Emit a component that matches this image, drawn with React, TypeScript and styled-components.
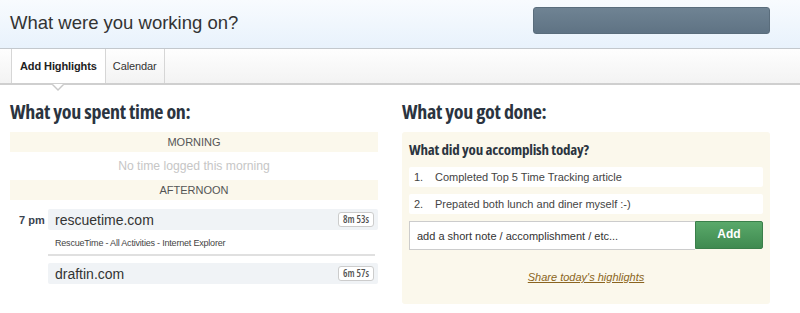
import styled, { createGlobalStyle } from "styled-components";

const GlobalStyle = createGlobalStyle`
  html, body {
    margin: 0;
    padding: 0;
    background: #fff;
    font-family: "Liberation Sans", Arial, sans-serif;
  }
  * { box-sizing: border-box; }
`;

// --- Header ---
const Header = styled.header`
  height: 49px;
  display: flex;
  align-items: center;
  justify-content: space-between;
  padding: 0 30px 0 10px;
  background: linear-gradient(#f8fbfe, #e8f2fc);
  border-bottom: 1px solid #c3c8cd;
`;
const Title = styled.h1`
  margin: 0 0 3px;
  font-size: 18.5px;
  font-weight: normal;
  color: #333;
`;
const DarkButton = styled.div`
  width: 237px;
  height: 27px;
  margin-top: -7px;
  border-radius: 3px;
  border: 1px solid #5a6d7c;
  background: linear-gradient(#6f8393, #5f7384);
`;

// --- Tabs ---
const TabBar = styled.nav`
  height: 36px;
  display: flex;
  padding-left: 11px;
  background: linear-gradient(#fefefe, #f3f3f3);
  border-bottom: 2px solid #cfcfcf;
`;
const Tab = styled.div<{ $active?: boolean }>`
  position: relative;
  display: flex;
  align-items: center;
  padding: 0 ${(p) => (p.$active ? "8px" : "7px")};
  font-size: 11px;
  letter-spacing: -0.1px;
  font-weight: ${(p) => (p.$active ? "bold" : "normal")};
  color: ${(p) => (p.$active ? "#222" : "#333")};
  background: ${(p) => (p.$active ? "#fff" : "transparent")};
  border-left: ${(p) => (p.$active ? "1px solid #d6d6d6" : "none")};
  border-right: 1px solid #d6d6d6;

  ${(p) =>
    p.$active &&
    `
    &::after {
      content: "";
      position: absolute;
      left: 50%;
      bottom: -8px;
      margin-left: -6px;
      border-left: 6px solid transparent;
      border-right: 6px solid transparent;
      border-top: 6px solid #c8c8c8;
    }
    &::before {
      content: "";
      position: absolute;
      left: 50%;
      bottom: -6px;
      margin-left: -5px;
      border-left: 5px solid transparent;
      border-right: 5px solid transparent;
      border-top: 5px solid #fff;
      z-index: 1;
    }
  `}
`;

// --- Main columns ---
const Main = styled.main`
  display: grid;
  grid-template-columns: 368px 368px;
  gap: 24px;
  padding: 0 30px 0 10px;
`;
const Column = styled.section`
  display: flex;
  flex-direction: column;
`;
const SectionHeading = styled.h2`
  margin: 15px 0 8px;
  font-family: "Open Sans", sans-serif;
  font-stretch: 75%;
  font-size: 20px;
  font-weight: 700;
  line-height: 24px;
  color: #2b3440;
  letter-spacing: -0.3px;
`;

const Band = styled.div`
  height: 20px;
  line-height: 20px;
  text-align: center;
  font-size: 11px;
  color: #555;
  background: #fbf8ec;
`;
const EmptyNote = styled.div`
  height: 28px;
  line-height: 28px;
  text-align: center;
  font-size: 12.2px;
  color: #c6c6c6;
`;

const HourRow = styled.div`
  display: flex;
  margin-top: 9px;
`;
const HourLabel = styled.div`
  width: 38px;
  padding: 5px 0 0 9px;
  font-size: 11px;
  font-weight: bold;
  color: #3a4350;
`;
const Entries = styled.div`
  flex: 1;
  display: flex;
  flex-direction: column;
`;
const SiteBox = styled.div`
  height: 21px;
  display: flex;
  align-items: center;
  justify-content: space-between;
  padding: 0 4px 0 7px;
  background: #f0f3f6;
  border-radius: 2px;
`;
const SiteName = styled.span`
  font-size: 14px;
  color: #333;
`;
const Badge = styled.span`
  height: 15px;
  line-height: 13px;
  padding: 0 4px;
  font-family: "Open Sans", sans-serif;
  font-stretch: 75%;
  font-size: 10px;
  font-weight: 600;
  color: #555;
  background: #fff;
  border: 1px solid #ccc;
  border-radius: 3px;
`;
const SubTitle = styled.div`
  padding: 8px 7px 6px;
  font-size: 9px;
  color: #444;
  letter-spacing: -0.2px;
  border-bottom: 2px solid #e0e0e0;
  margin-right: 3px;
  margin-bottom: 7px;
`;

// --- Right panel ---
const DonePanel = styled.div`
  height: 172px;
  display: flex;
  flex-direction: column;
  padding: 7px 7px 0;
  background: #fbf8ec;
  border-radius: 3px;
`;
const PanelHeading = styled.h3`
  margin: 0 0 8px;
  font-family: "Open Sans", sans-serif;
  font-stretch: 75%;
  font-size: 15px;
  font-weight: 700;
  color: #2b3440;
  letter-spacing: -0.2px;
`;
const DoneList = styled.ol`
  list-style: none;
  margin: 0;
  padding: 0;
  display: flex;
  flex-direction: column;
  gap: 7px;
`;
const DoneItem = styled.li`
  height: 20px;
  display: flex;
  align-items: center;
  padding-left: 5px;
  font-size: 11px;
  color: #444;
  background: #fff;
  border-radius: 2px;
`;
const ItemNum = styled.span`
  width: 21px;
`;
const AddRow = styled.div`
  display: flex;
  margin-top: 7px;
`;
const NoteInput = styled.div`
  flex: 1;
  height: 29px;
  display: flex;
  align-items: center;
  padding-left: 7px;
  font-size: 11px;
  color: #333;
  background: #fff;
  border: 1px solid #ccc;
  border-right: none;
`;
const AddButton = styled.div`
  width: 68px;
  height: 28px;
  display: flex;
  align-items: center;
  justify-content: center;
  padding-bottom: 2px;
  font-size: 12px;
  font-weight: bold;
  color: #fff;
  background: linear-gradient(#5aa96a, #3f8a50);
  border: 1px solid #3a7f4a;
  border-radius: 0 2px 2px 0;
`;
const ShareLink = styled.a`
  margin-top: 21px;
  align-self: center;
  font-size: 11px;
  font-style: italic;
  color: #8a6420;
  text-decoration: underline;
`;

export default function App() {
  return (
    <>
      <GlobalStyle />
      <Header>
        <Title>What were you working on?</Title>
        <DarkButton />
      </Header>
      <TabBar>
        <Tab $active>Add Highlights</Tab>
        <Tab>Calendar</Tab>
      </TabBar>
      <Main>
        <Column>
          <SectionHeading>What you spent time on:</SectionHeading>
          <Band>MORNING</Band>
          <EmptyNote>No time logged this morning</EmptyNote>
          <Band>AFTERNOON</Band>
          <HourRow>
            <HourLabel>7 pm</HourLabel>
            <Entries>
              <SiteBox>
                <SiteName>rescuetime.com</SiteName>
                <Badge>8m 53s</Badge>
              </SiteBox>
              <SubTitle>RescueTime - All Activities - Internet Explorer</SubTitle>
              <SiteBox>
                <SiteName>draftin.com</SiteName>
                <Badge>6m 57s</Badge>
              </SiteBox>
            </Entries>
          </HourRow>
        </Column>
        <Column>
          <SectionHeading>What you got done:</SectionHeading>
          <DonePanel>
            <PanelHeading>What did you accomplish today?</PanelHeading>
            <DoneList>
              <DoneItem>
                <ItemNum>1.</ItemNum>Completed Top 5 Time Tracking article
              </DoneItem>
              <DoneItem>
                <ItemNum>2.</ItemNum>Prepated both lunch and diner myself :-)
              </DoneItem>
            </DoneList>
            <AddRow>
              <NoteInput>add a short note / accomplishment / etc...</NoteInput>
              <AddButton>Add</AddButton>
            </AddRow>
            <ShareLink href="#">Share today's highlights</ShareLink>
          </DonePanel>
        </Column>
      </Main>
    </>
  );
}
